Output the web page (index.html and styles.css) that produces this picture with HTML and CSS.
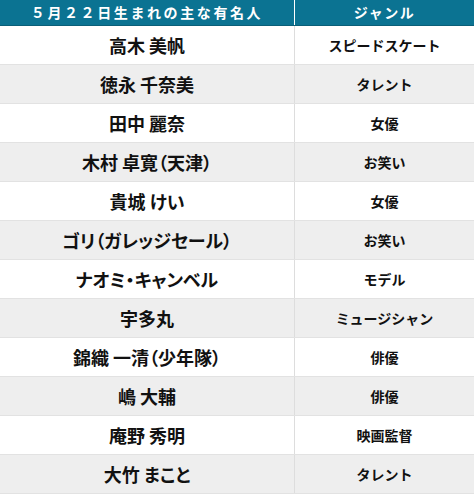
FILE: index.html
```html
<!DOCTYPE html>
<html lang="ja">
<head>
<meta charset="utf-8">
<link rel="stylesheet" href="styles.css">
</head>
<body>
<table class="famous">
  <thead>
    <tr><th class="name-col">５月２２日生まれの主な有名人</th><th class="genre-col">ジャンル</th></tr>
  </thead>
  <tbody>
    <tr><td class="name">高木 美帆</td><td class="genre">スピードスケート</td></tr>
    <tr><td class="name">徳永 千奈美</td><td class="genre">タレント</td></tr>
    <tr><td class="name">田中 麗奈</td><td class="genre">女優</td></tr>
    <tr><td class="name">木村 卓寛（天津）</td><td class="genre">お笑い</td></tr>
    <tr><td class="name">貴城 けい</td><td class="genre">女優</td></tr>
    <tr><td class="name">ゴリ（ガレッジセール）</td><td class="genre">お笑い</td></tr>
    <tr><td class="name">ナオミ・キャンベル</td><td class="genre">モデル</td></tr>
    <tr><td class="name">宇多丸</td><td class="genre">ミュージシャン</td></tr>
    <tr><td class="name">錦織 一清（少年隊）</td><td class="genre">俳優</td></tr>
    <tr><td class="name">嶋 大輔</td><td class="genre">俳優</td></tr>
    <tr><td class="name">庵野 秀明</td><td class="genre">映画監督</td></tr>
    <tr><td class="name">大竹 まこと</td><td class="genre">タレント</td></tr>
  </tbody>
</table>
</body>
</html>
```
FILE: styles.css
```css
html, body {
  margin: 0;
  padding: 0;
  background: #ffffff;
}
body {
  font-family: "Noto Sans CJK JP", "Noto Sans", sans-serif;
  color: #111111;
}
.famous {
  width: 474px;
  border-collapse: collapse;
  table-layout: fixed;
}
.famous th {
  background: #0b7392;
  color: #ffffff;
  font-size: 14px;
  font-weight: bold;
  height: 25px;
  padding: 0;
  border-bottom: 1px solid #0a5f78;
  line-height: 25px;
}
.famous th.name-col {
  width: 294px;
  letter-spacing: 2.6px;
  border-right: 1px solid #ffffff;
}
.famous th.genre-col {
  letter-spacing: 1.5px;
}
.famous td {
  height: 38px;
  padding: 0;
  text-align: center;
  font-weight: bold;
  border-bottom: 1px solid #e2e2e2;
}
.famous td.name {
  font-size: 18px;
  font-feature-settings: "palt";
  border-right: 1px solid #dddddd;
}
.famous td.genre {
  font-size: 14px;
}
.famous tbody tr:nth-child(even) td {
  background: #eeeeee;
}
```
